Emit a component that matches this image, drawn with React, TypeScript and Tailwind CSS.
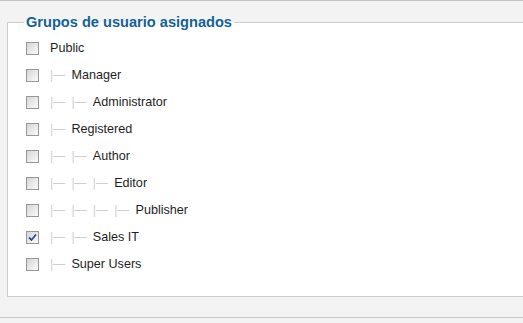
import React from 'react';

type Group = { name: string; level: number; checked?: boolean };

const groups: Group[] = [
  { name: 'Public', level: 0 },
  { name: 'Manager', level: 1 },
  { name: 'Administrator', level: 2 },
  { name: 'Registered', level: 1 },
  { name: 'Author', level: 2 },
  { name: 'Editor', level: 3 },
  { name: 'Publisher', level: 4 },
  { name: 'Sales IT', level: 2, checked: true },
  { name: 'Super Users', level: 1 },
];

/** Casilla estilo clásico */
const Box = ({ checked }: { checked?: boolean }) => (
  <span className="relative flex h-[13px] w-[13px] shrink-0 border border-[#979797] bg-gradient-to-br from-[#d6d6d6] to-[#fbfbfb]">
    {checked && (
      <svg className="absolute left-[1px] top-[1px] h-[9px] w-[9px]" viewBox="0 0 9 9">
        <path d="M1 4.5 L3.5 7 L8 1.5" fill="none" stroke="#2b4f96" strokeWidth={1.8} />
      </svg>
    )}
  </span>
);

const App = () => {
  return (
    <div className="h-[323px] w-[523px] overflow-hidden border-t border-[#c4c4c4] bg-[#f3f3f3] font-['Liberation_Sans',Arial,sans-serif]">
      <fieldset className="ml-[7px] mt-[13px] h-[283px] w-[540px] border border-[#cccccc] bg-white pl-[18px] pt-[5px]">
        <legend className="ml-[-2px] px-[2px] text-[14.6px] font-bold leading-[16px] text-[#146295]">
          Grupos de usuario asignados
        </legend>
        <ul className="flex flex-col">
          {groups.map((g) => (
            <li key={g.name} className="flex h-[27px] items-center">
              <Box checked={g.checked} />
              <span className="ml-[11px] flex items-center text-[12.6px] text-[#1e1e1e]">
                {Array.from({ length: g.level }).map((_, i) => (
                  <span key={i} className="inline-block w-[21.4px] text-[12px] text-[#cfcfcf]">
                    |—
                  </span>
                ))}
                {g.name}
              </span>
            </li>
          ))}
        </ul>
      </fieldset>
      <div className="h-[21px] border-b border-[#c8c8c8]" />
    </div>
  );
};

export default App;
